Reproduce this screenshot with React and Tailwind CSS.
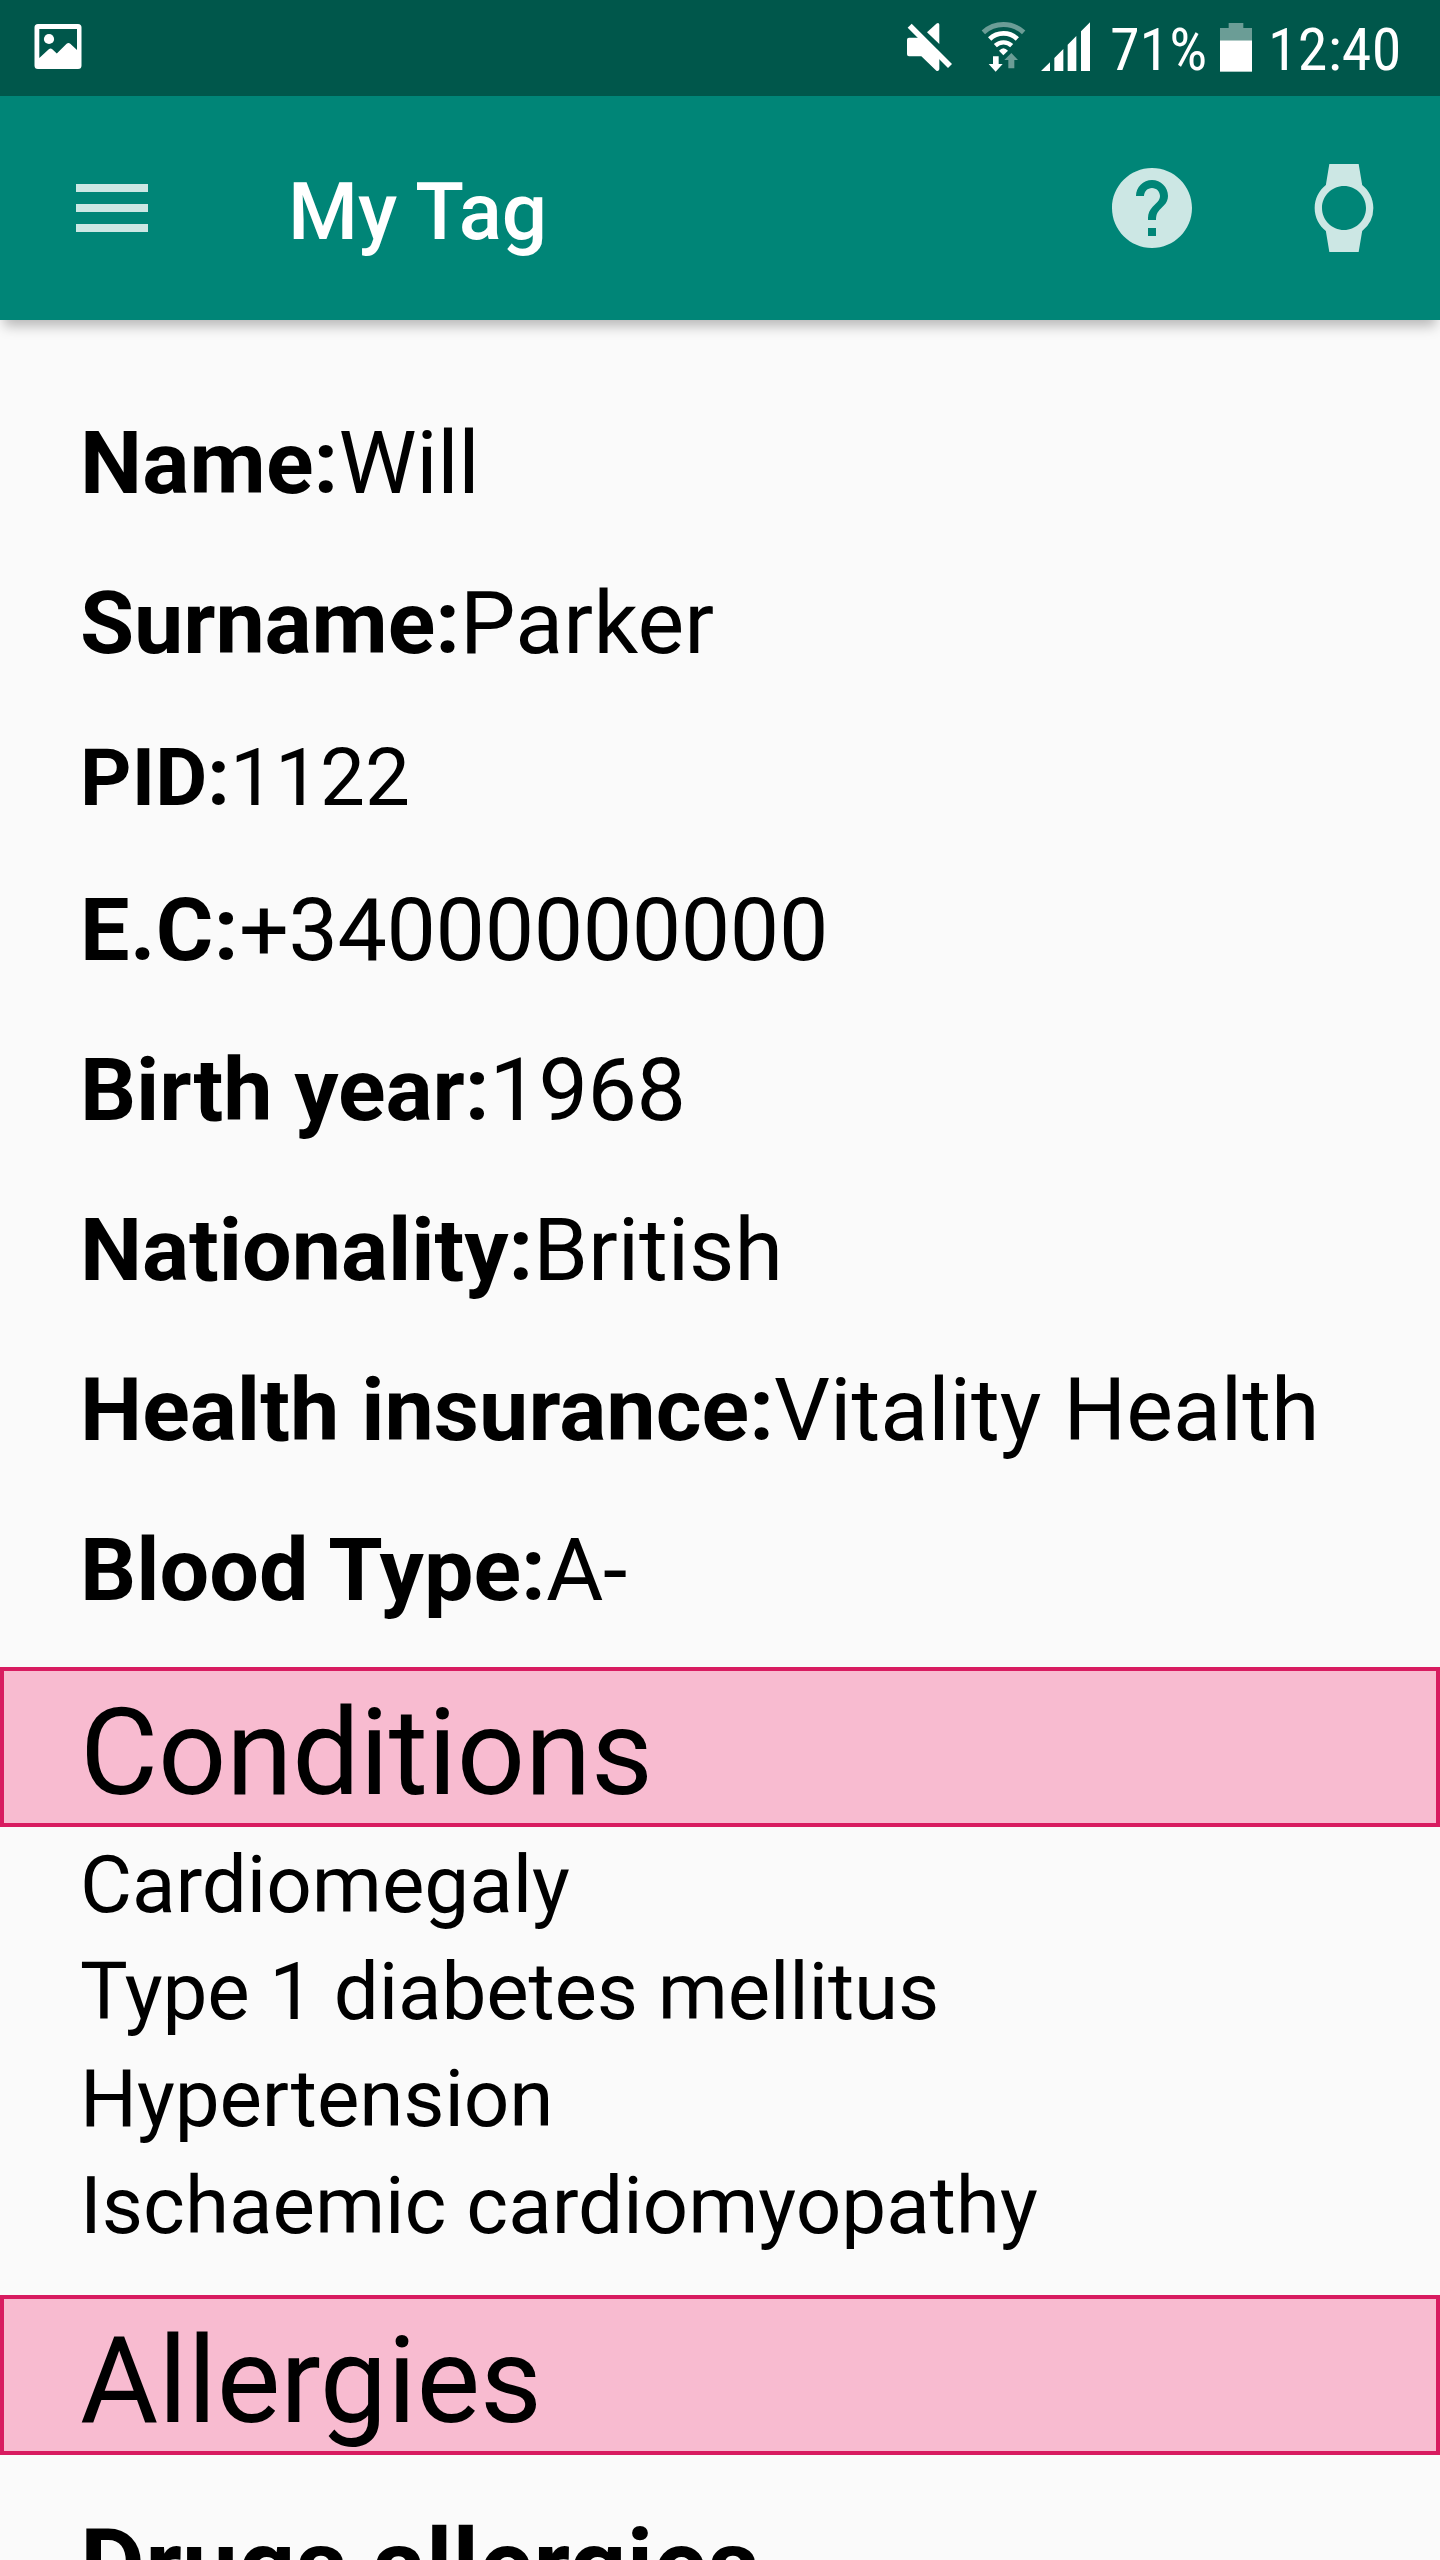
import { MdHelp, MdWatch } from "react-icons/md";

const FIELDS = [
  { label: "Name:", value: "Will", row: "h-[160px]", labelCls: "tracking-[0.16px]", valueCls: "tracking-[-0.4px]" },
  { label: "Surname:", value: "Parker", row: "h-[160px]", labelCls: "tracking-[-0.1px]", valueCls: "tracking-[0.27px]" },
  { label: "PID:", value: "1122", row: "h-[147px] text-[80px] leading-[94px]", labelCls: "tracking-[0.13px]", valueCls: "" },
  { label: "E.C:", value: "+34000000000", row: "h-[160px]", labelCls: "tracking-[0.4px]", valueCls: "tracking-[-0.42px]" },
  { label: "Birth year:", value: "1968", row: "h-[160px]", labelCls: "tracking-[-0.07px]", valueCls: "tracking-[-0.42px]" },
  { label: "Nationality:", value: "British", row: "h-[160px]", labelCls: "tracking-[-0.04px]", valueCls: "tracking-[-0.1px]" },
  { label: "Health insurance:", value: "Vitality Health", row: "h-[160px]", labelCls: "tracking-[0.03px]", valueCls: "tracking-[0.03px]" },
  { label: "Blood Type:", value: "A-", row: "h-[160px]", labelCls: "tracking-[0.07px]", valueCls: "tracking-[-0.4px]" },
];

const CONDITIONS = [
  { text: "Cardiomegaly", cls: "tracking-[-0.05px]" },
  { text: "Type 1 diabetes mellitus", cls: "tracking-[-0.14px]" },
  { text: "Hypertension", cls: "tracking-[-0.1px]" },
  { text: "Ischaemic cardiomyopathy", cls: "" },
];

function ImageIcon() {
  return (
    <svg className="mt-5 ml-[32px] h-[52px] w-[52px] shrink-0" viewBox="32 20 52 52">
      <path
        fill="#fff"
        fillRule="evenodd"
        d="M38 24H78Q81.500 24 81.500 27.500V65.500Q81.500 69 78 69H38Q34.500 69 34.500 65.500V27.500Q34.500 24 38 24ZM39.300 29V58L48.800 49.200Q50.600 47.600 52.300 49.200L56.800 53.500L66.600 43.800Q68.500 42 70.300 43.800L77 50V29Z"
      />
      <circle cx="49" cy="39" r="5.100" fill="#fff" />
    </svg>
  );
}

function MuteIcon() {
  return (
    <svg className="mt-5 ml-[822px] h-[53px] w-[47px] shrink-0" viewBox="78 60 141 159">
      <path fill="#fff" d="M81 119Q81 113 87 113H125L178 164V208Q176 215 169 212L124 169H87Q81 169 81 163Z" />
      <path fill="#fff" d="M141 97L169 71Q177 66 178 74V132Z" />
      <path stroke="#fff" strokeWidth="17" d="M89 77L210 198" />
    </svg>
  );
}

function WifiIcon() {
  return (
    <svg className="mt-5 ml-[28px] h-[53px] w-[45px] shrink-0" viewBox="303 60 135 159" fill="none">
      <path stroke="#fff" strokeOpacity="0.42" strokeWidth="15" d="M310 97A90 90 0 0 1 431 97" />
      <path stroke="#fff" strokeWidth="14" d="M329 117A59 59 0 0 1 412 117" />
      <path stroke="#fff" strokeWidth="13" d="M346 137A35 35 0 0 1 395 137" />
      <path fill="#fff" d="M357 152Q370 137 384 152L370 166Z" />
      <path fill="#fff" d="M339 169H356V192H368L347 215L326 192H339Z" />
      <path fill="#fff" fillOpacity="0.42" d="M394 159L414 180H403V205H385V180H373Z" />
    </svg>
  );
}

function SignalIcon() {
  return (
    <svg className="mt-5 ml-[14px] h-[53px] w-[51px] shrink-0" viewBox="480 60 153 159">
      <path
        fill="#fff"
        d="M483 213L510 187V213ZM523 174L550 147V213H523ZM563 134L589 108V213H563ZM603 94L630 67V213H603Z"
      />
    </svg>
  );
}

function BatteryIcon() {
  return (
    <svg className="mt-5 h-[53px] w-[36px] shrink-0" viewBox="354 60 108 159">
      <path fill="#fff" fillOpacity="0.42" d="M386 69H430V84H456V121H360V84H386Z" />
      <path fill="#fff" d="M360 121H456V215H360Z" />
    </svg>
  );
}

function StatusBar() {
  return (
    <div className="flex h-24 shrink-0 items-start bg-[#00574b] font-['Roboto_Condensed','Roboto',sans-serif] text-[60px] leading-[71px] whitespace-nowrap text-white">
      <ImageIcon />
      <MuteIcon />
      <WifiIcon />
      <SignalIcon />
      <span className="mt-[14px] ml-[19px] w-[108px] shrink-0">71%</span>
      <BatteryIcon />
      <span className="mt-[14px] ml-[14px] shrink-0 tracking-[0.2px]">12:40</span>
    </div>
  );
}

function AppBar() {
  return (
    <div className="z-10 flex h-56 shrink-0 items-start bg-[#008577] text-white shadow-[0_10px_12px_-4px_rgba(0,0,0,0.27)]">
      <div className="mt-[88px] ml-[76px] flex w-[72px] flex-col gap-3">
        <div className="h-2 bg-[#cce7e4]" />
        <div className="h-2 bg-[#cce7e4]" />
        <div className="h-2 bg-[#cce7e4]" />
      </div>
      <h1 className="mt-[69px] ml-[140px] w-[816px] text-[80px] leading-[94px] font-medium">My Tag</h1>
      <MdHelp className="mt-16 h-24 w-24 shrink-0 text-[#cce7e4]" />
      <MdWatch className="mt-[68px] ml-[100px] h-[88px] w-[88px] shrink-0 text-[#cce7e4]" />
    </div>
  );
}

function Band({ children, className = "" }) {
  return (
    <h2
      className={
        "h-[160px] shrink-0 border-4 border-[#d81b60] bg-[#f8bbd0] pt-3 pl-[76px] text-[120px] leading-[140px] " + className
      }
    >
      {children}
    </h2>
  );
}

export default function App() {
  return (
    <div className="flex h-[2560px] w-[1440px] flex-col overflow-hidden bg-[#fafafa] font-['Roboto',sans-serif] text-black">
      <StatusBar />
      <AppBar />
      <div className="flex h-[1347px] shrink-0 flex-col pt-[91px] pl-20 text-[88px] leading-[103px] whitespace-nowrap">
        {FIELDS.map((f) => (
          <div key={f.label} className={"shrink-0 " + f.row}>
            <span className={"font-bold " + f.labelCls}>{f.label}</span>
            <span className={f.valueCls}>{f.value}</span>
          </div>
        ))}
      </div>
      <Band className="tracking-[-0.2px]">Conditions</Band>
      <div className="h-[468px] shrink-0 pt-[5px] pl-20 text-[80px] leading-[106px] whitespace-nowrap">
        {CONDITIONS.map((c) => (
          <div key={c.text} className={"h-[107px] " + c.cls}>
            {c.text}
          </div>
        ))}
      </div>
      <Band>Allergies</Band>
      <div className="shrink-0 pt-[52px] pl-20 text-[100px] leading-[117px] font-bold tracking-[0.2px] whitespace-nowrap">
        Drugs allergies
      </div>
    </div>
  );
}
